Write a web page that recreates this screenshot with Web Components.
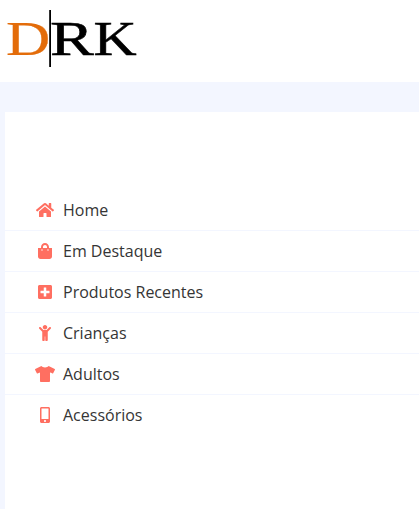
<!DOCTYPE html>
<html lang="pt">
<head>
<meta charset="utf-8">
<title>DRK</title>
<style>
html, body { margin: 0; height: 100%; overflow: hidden; background: #f3f6ff; font-family: "Open Sans", sans-serif; }
</style>
</head>
<body>
<shop-page>
  <brand-logo slot="header"></brand-logo>
  <category-menu>
    <category-item icon="home">Home</category-item>
    <category-item icon="bag">Em Destaque</category-item>
    <category-item icon="plus">Produtos Recentes</category-item>
    <category-item icon="child">Crianças</category-item>
    <category-item icon="shirt">Adultos</category-item>
    <category-item icon="mobile">Acessórios</category-item>
  </category-menu>
</shop-page>
<script>
const ICONS = {
  home: [576, "M280.37 148.26L96 300.11V464a16 16 0 0 0 16 16l112.06-.29a16 16 0 0 0 15.92-16V368a16 16 0 0 1 16-16h64a16 16 0 0 1 16 16v95.64a16 16 0 0 0 16 16.05L464 480a16 16 0 0 0 16-16V300L295.67 148.26a12.19 12.19 0 0 0-15.3 0zM571.6 251.47L488 182.56V44.05a12 12 0 0 0-12-12h-56a12 12 0 0 0-12 12v72.61L318.47 43a48 48 0 0 0-61 0L4.34 251.47a12 12 0 0 0-1.6 16.9l25.5 31A12 12 0 0 0 45.15 301l235.22-193.74a12.19 12.19 0 0 1 15.3 0L530.9 301a12 12 0 0 0 16.9-1.6l25.5-31a12 12 0 0 0-1.7-16.93z"],
  bag: [448, "M352 160v-32C352 57.42 294.579 0 224 0 153.42 0 96 57.42 96 128v32H0v272c0 44.183 35.817 80 80 80h288c44.183 0 80-35.817 80-80V160h-96zm-192-32c0-35.29 28.71-64 64-64s64 28.71 64 64v32H160v-32zm160 120c-13.255 0-24-10.745-24-24s10.745-24 24-24 24 10.745 24 24-10.745 24-24 24zm-192 0c-13.255 0-24-10.745-24-24s10.745-24 24-24 24 10.745 24 24-10.745 24-24 24z"],
  plus: [448, "M400 32H48C21.5 32 0 53.5 0 80v352c0 26.5 21.5 48 48 48h352c26.5 0 48-21.5 48-48V80c0-26.5-21.5-48-48-48zm-32 252c0 6.6-5.4 12-12 12h-92v92c0 6.6-5.4 12-12 12h-56c-6.6 0-12-5.4-12-12v-92H92c-6.6 0-12-5.4-12-12v-56c0-6.6 5.4-12 12-12h92v-92c0-6.6 5.4-12 12-12h56c6.6 0 12 5.4 12 12v92h92c6.6 0 12 5.4 12 12v56z"],
  child: [384, "M120 72c0-39.765 32.235-72 72-72s72 32.235 72 72c0 39.764-32.235 72-72 72s-72-32.236-72-72zm254.627 1.373c-12.496-12.497-32.758-12.497-45.254 0L242.745 160H141.254L54.627 73.373c-12.496-12.497-32.758-12.497-45.254 0-12.497 12.497-12.497 32.758 0 45.255L104 213.254V480c0 17.673 14.327 32 32 32h16c17.673 0 32-14.327 32-32V368h16v112c0 17.673 14.327 32 32 32h16c17.673 0 32-14.327 32-32V213.254l94.627-94.627c12.497-12.497 12.497-32.757 0-45.254z"],
  shirt: [640, "M631.2 96.5L436.5 0C416.4 27.8 371.9 47.2 320 47.2S223.6 27.8 203.5 0L8.8 96.5c-7.9 4-11.1 13.6-7.2 21.5l57.2 114.5c4 7.9 13.6 11.1 21.5 7.2l56.6-27.7c10.6-5.2 23 2.5 23 14.4V480c0 17.7 14.3 32 32 32h256c17.7 0 32-14.3 32-32V226.3c0-11.8 12.4-19.6 23-14.4l56.6 27.7c7.9 4 17.5.8 21.5-7.2L638.3 118c4-7.9.8-17.6-7.1-21.5z"],
  mobile: [320, "M272 0H48C21.5 0 0 21.5 0 48v416c0 26.5 21.5 48 48 48h224c26.5 0 48-21.5 48-48V48c0-26.5-21.5-48-48-48zM160 480c-17.7 0-32-14.3-32-32s14.3-32 32-32 32 14.3 32 32-14.3 32-32 32zm112-108c0 6.6-5.4 12-12 12H60c-6.6 0-12-5.4-12-12V60c0-6.6 5.4-12 12-12h200c6.6 0 12 5.4 12 12v312z"]
};

class ShadowElement extends HTMLElement {
  connectedCallback() {
    if (!this.shadowRoot) this.attachShadow({ mode: "open" }).innerHTML = this.view();
  }
}

customElements.define("shop-page", class extends ShadowElement {
  view() {
    return `<style>
      :host { display: flex; flex-direction: column; height: 100vh; }
      header { height: 82px; flex: none; background: #fff; }
      main { flex: 1; display: flex; padding: 30px 0 0 5px; }
    </style><header><slot name="header"></slot></header><main><slot></slot></main>`;
  }
});

customElements.define("brand-logo", class extends ShadowElement {
  view() {
    return `<style>
      :host { display: block; }
      svg { display: block; }
      text { font: 49px "Liberation Serif", serif; stroke-width: .5px; }
    </style>
    <svg width="145" height="72">
      <text transform="translate(6.1 55.3) scale(1.25 1)" fill="#e36c0a" stroke="#e36c0a" style="stroke-width:.2px">D</text>
      <text transform="translate(50 55.3) scale(1.34 1)" stroke="#000">R</text>
      <text transform="translate(93.6 55.3) scale(1.22 1)" stroke="#000">K</text>
      <rect x="49.2" y="10" width="1.8" height="57"/>
    </svg>`;
  }
});

customElements.define("category-menu", class extends ShadowElement {
  view() {
    return `<style>
      :host { display: flex; flex-direction: column; flex: 1; background: #fff; padding-top: 78px; box-sizing: border-box; }
      ::slotted(:not(:last-child)) { border-bottom: 1px solid #f3f6ff; }
    </style><slot></slot>`;
  }
});

customElements.define("category-item", class extends ShadowElement {
  view() {
    const [w, d] = ICONS[this.getAttribute("icon")];
    return `<style>
      :host { display: flex; align-items: center; height: 40px; padding-left: 30px; color: #353535; font-size: 16px; }
      .icon { display: flex; justify-content: center; width: 20px; margin-right: 8px; }
      svg { display: block; flex: none; height: 16px; fill: #ff6f61; }
    </style>
    <span class="icon"><svg width="${w / 32}" viewBox="0 0 ${w} 512"><path d="${d}"/></svg></span>
    <span><slot></slot></span>`;
  }
});
</script>
</body>
</html>
